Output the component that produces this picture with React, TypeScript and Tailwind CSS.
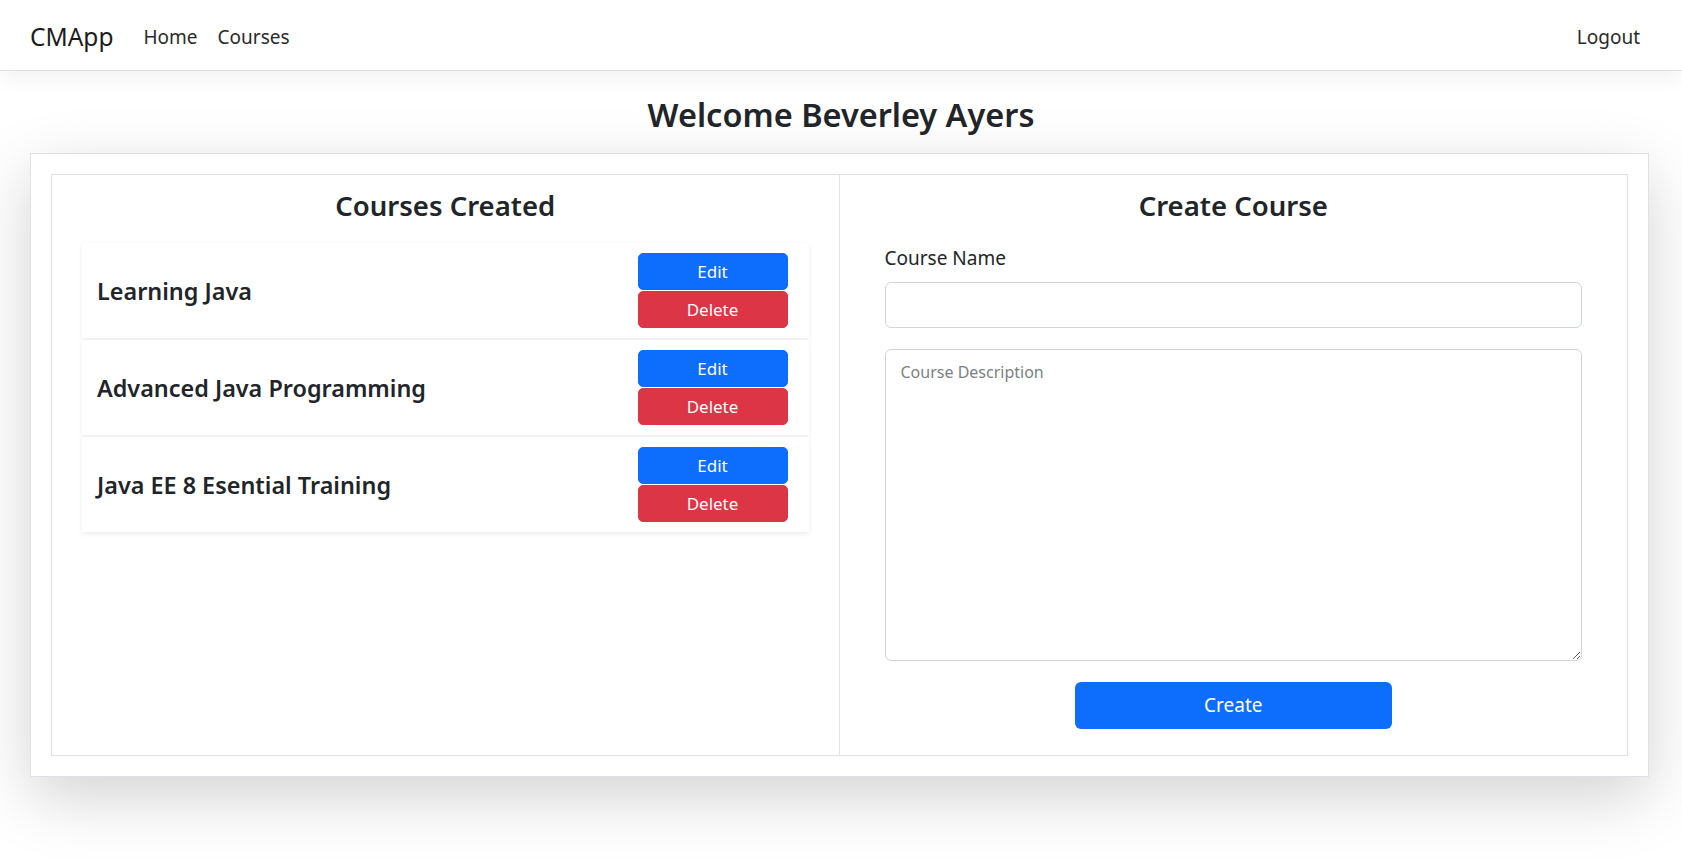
import React from "react";

const courses = ["Learning Java", "Advanced Java Programming", "Java EE 8 Esential Training"];

export default function App() {
  return (
    <div className="min-h-screen bg-white text-[#212529] font-['Noto_Sans',sans-serif]">
      <nav className="relative z-10 flex h-[71px] items-center justify-between border-b border-[#dee2e6] bg-white pl-[30px] pr-[32px] pt-[4px] shadow-[0_8px_18px_rgba(0,0,0,0.05)]">
        <div className="flex items-center">
          <span className="mr-[20px] text-[24.5px] leading-[38px] text-[#1c1c1c]">CMApp</span>
          <a className="px-[10px] text-[19px] leading-[30px] text-[#2a2a2a]">Home</a>
          <a className="px-[10px] text-[19px] leading-[30px] text-[#2a2a2a]">Courses</a>
        </div>
        <a className="px-[10px] text-[19px] leading-[30px] text-[#2a2a2a]">Logout</a>
      </nav>

      <main className="pt-[23px]">
        <h3 className="mb-[17px] text-center text-[32.5px] font-semibold leading-[42px]">Welcome Beverley Ayers</h3>

        <div className="ml-[30px] mr-[33px] border border-[#dee2e6] bg-white p-[20px] shadow-[0_20px_60px_rgba(0,0,0,0.175)]">
          <div className="grid grid-cols-2">
            <section className="border border-[#dee2e6] px-[30px] pt-[13px]">
              <h4 className="mb-[19px] text-center text-[27.5px] font-semibold leading-[36px]">Courses Created</h4>
              <div className="flex flex-col gap-[2px]">
                {courses.map((c) => (
                  <div
                    key={c}
                    className="flex items-center justify-between bg-white py-[10px] pl-[15px] pr-[21px] shadow-[0_2px_5px_rgba(0,0,0,0.075)]"
                  >
                    <h5 className="text-[23.4px] font-semibold leading-[30px]">{c}</h5>
                    <div className="flex w-[150px] flex-col gap-[1px]">
                      <button className="h-[37px] rounded-[5px] border border-[#0d6efd] bg-[#0d6efd] text-[17px] text-white">
                        Edit
                      </button>
                      <button className="h-[37px] rounded-[5px] border border-[#dc3545] bg-[#dc3545] text-[17px] text-white">
                        Delete
                      </button>
                    </div>
                  </div>
                ))}
              </div>
            </section>

            <section className="border border-l-0 border-[#dee2e6] px-[45px] pb-[26px] pt-[13px]">
              <h4 className="mb-[19px] text-center text-[27.5px] font-semibold leading-[36px]">Create Course</h4>
              <label className="mb-[9px] block text-[19px] leading-[30px]">Course Name</label>
              <input
                type="text"
                className="block h-[46px] w-full rounded-[6px] border border-[#ced4da] px-[15px] text-[19px] outline-none"
              />
              <textarea
                placeholder="Course Description"
                className="mt-[21px] block h-[312px] w-full rounded-[6px] border border-[#ced4da] px-[15px] pt-[10px] text-[16px] leading-[24px] outline-none placeholder:text-[#7b7f83]"
              />
              <div className="mt-[21px] flex justify-center">
                <button className="h-[47px] w-[317px] rounded-[6px] bg-[#0d6efd] text-[19px] text-white">Create</button>
              </div>
            </section>
          </div>
        </div>
      </main>
    </div>
  );
}
